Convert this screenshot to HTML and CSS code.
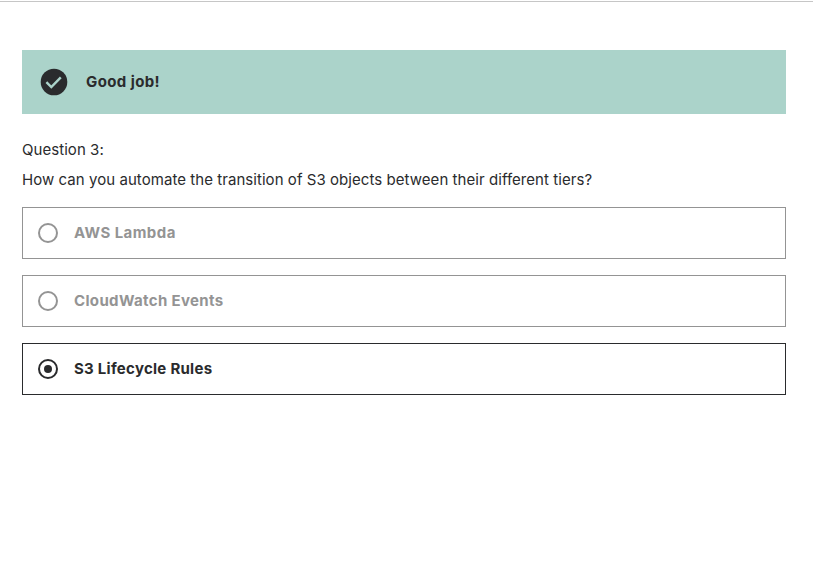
FILE: index.html
```html
<!DOCTYPE html>
<html lang="en">
<head>
<meta charset="utf-8">
<title>Quiz</title>
<link rel="stylesheet" href="styles.css">
</head>
<body>
<main class="quiz">
  <div class="banner">
    <svg class="check" viewBox="0 0 28 28"><circle cx="14" cy="14" r="13.3"/><path d="M6.4 14.2l4.9 4.9 9.5-9.8"/></svg>
    <strong class="message">Good job!</strong>
  </div>
  <p class="line">Question 3:</p>
  <p class="line">How can you automate the transition of S3 objects between their different tiers?</p>
  <div class="options">
    <div class="option"><span class="radio"></span><span class="label label-short">AWS Lambda</span></div>
    <div class="option"><span class="radio"></span><span class="label">CloudWatch Events</span></div>
    <div class="option selected"><span class="radio"></span><span class="label label-long">S3 Lifecycle Rules</span></div>
  </div>
</main>
</body>
</html>
```
FILE: styles.css
```css
* { box-sizing: border-box; }
body {
  margin: 0;
  background: #fff;
  color: #2a2b2d;
  font: 15px/30px Inter, "Liberation Sans", sans-serif;
}
.quiz {
  border-top: 1px solid #c6c6c6;
  margin-top: 1px;
  padding: 48px 27px 0 22px;
}
.banner {
  display: flex;
  align-items: center;
  height: 64px;
  margin-bottom: 21px;
  padding-left: 18px;
  background: #abd3ca;
}
.check { width: 28px; height: 28px; margin-right: 18px; fill: #2a2b2d; }
.check path { fill: none; stroke: #abd3ca; stroke-width: 2.4; }
.message { font-weight: 700; letter-spacing: .4px; }
.line { margin: 0; white-space: nowrap; letter-spacing: .055px; }
.options { display: grid; gap: 16px; margin-top: 12px; }
.option {
  display: flex;
  align-items: center;
  gap: 16px;
  height: 52px;
  padding-left: 15px;
  border: 1px solid #949494;
  color: #949494;
  font-weight: 700;
}
.label { letter-spacing: .35px; }
.label-short { letter-spacing: .43px; }
.label-long { letter-spacing: .27px; }
.radio {
  display: grid;
  place-items: center;
  width: 20px;
  height: 20px;
  border: 2px solid #949494;
  border-radius: 50%;
}
.selected { border-color: #2a2b2d; color: #2a2b2d; }
.selected .radio { border-color: #2a2b2d; }
.selected .radio::before {
  content: "";
  width: 8px;
  height: 8px;
  border-radius: 50%;
  background: #2a2b2d;
}
```
